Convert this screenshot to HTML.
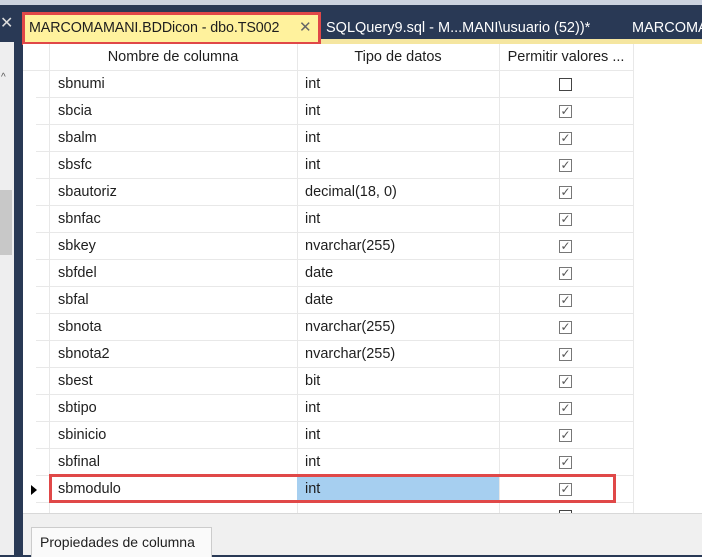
<!DOCTYPE html><html><head><style>
*{margin:0;padding:0;box-sizing:border-box}
body{width:702px;height:555px;overflow:hidden;background:#293955;font-family:"Liberation Sans",sans-serif;font-size:14.5px;position:relative;color:#1e1e1e}
.abs{position:absolute}
.cell{position:absolute;height:27px;line-height:27px;white-space:nowrap}
.cb{position:absolute;width:13px;height:13px;border:1px solid #555;background:#fff}
</style></head><body>
<div class="abs" style="left:0;top:0;width:702px;height:5px;background:#ccd3e0"></div>
<div class="abs" style="left:0;top:42px;width:14px;height:513px;background:#eeeeef"></div>
<div class="abs" style="left:0;top:5px;width:14px;height:37px;color:#ddd;font-size:16px;line-height:37px">✕</div>
<div class="abs" style="left:1px;top:72px;font-size:10px;color:#555">^</div>
<div class="abs" style="left:0;top:190px;width:12px;height:65px;background:#c8c8c8"></div>
<div class="abs" style="left:22px;top:12px;width:299px;height:33px;background:#fff29d;border:3px solid #e04848"></div>
<div class="abs" style="left:29px;top:17px;font-size:14.3px;letter-spacing:-0.1px;color:#1e1e1e;line-height:22px">MARCOMAMANI.BDDicon - dbo.TS002</div>
<div class="abs" style="left:299px;top:17px;font-size:15px;color:#666;line-height:22px">✕</div>
<div class="abs" style="left:326px;top:17px;font-size:14.5px;color:#fff;line-height:22px">SQLQuery9.sql - M...MANI\usuario (52))*</div>
<div class="abs" style="left:632px;top:17px;width:70px;overflow:hidden;font-size:14.5px;color:#fff;line-height:22px;white-space:nowrap">MARCOMAMANI</div>
<div class="abs" style="left:321px;top:39px;width:381px;height:5px;background:#f5e6a0"></div>
<div class="abs" style="left:23px;top:44px;width:679px;height:470px;background:#fff"></div>
<div id="g"></div>
<div class="abs" style="left:23px;top:513px;width:679px;height:42px;background:#f0f0f0;border-top:1px solid #d8d8d8"></div>
<div class="abs" style="left:31px;top:527px;width:181px;height:30px;background:#fafafa;border:1px solid #ccc;border-bottom:none;padding-left:8px;line-height:28px;font-size:14px">Propiedades de columna</div>
<script>
var rows=[["sbnumi","int",0],["sbcia","int",1],["sbalm","int",1],["sbsfc","int",1],["sbautoriz","decimal(18, 0)",1],["sbnfac","int",1],["sbkey","nvarchar(255)",1],["sbfdel","date",1],["sbfal","date",1],["sbnota","nvarchar(255)",1],["sbnota2","nvarchar(255)",1],["sbest","bit",1],["sbtipo","int",1],["sbinicio","int",1],["sbfinal","int",1],["sbmodulo","int",1],["","",0]];
var h='';
function vl(x,y,hh){return '<div class="abs" style="left:'+x+'px;top:'+y+'px;width:1px;height:'+hh+'px;background:#e8e8e8"></div>'}
h+='<div class="cell" style="left:49px;top:44px;width:248px;text-align:center">Nombre de columna</div>';
h+='<div class="cell" style="left:297px;top:44px;width:202px;text-align:center">Tipo de datos</div>';
h+='<div class="cell" style="left:499px;top:44px;width:134px;text-align:center">Permitir valores ...</div>';
h+='<div class="abs" style="left:23px;top:70px;width:610px;height:1px;background:#e8e8e8"></div>';
h+=vl(49,44,470)+vl(297,44,470)+vl(499,44,470)+vl(633,44,470);
for(var i=0;i<rows.length;i++){var y=71+27*i,r=rows[i];
h+='<div class="abs" style="left:36px;top:'+(y+26)+'px;width:597px;height:1px;background:#e8e8e8"></div>';
if(i==15){h+='<div class="abs" style="left:297px;top:'+(y+1)+'px;width:202px;height:25px;background:#a6cff0"></div>';
h+='<div class="abs" style="left:31px;top:'+(y+9)+'px;width:0;height:0;border-left:6px solid #000;border-top:5px solid transparent;border-bottom:5px solid transparent"></div>';}
h+='<div class="cell" style="left:58px;top:'+y+'px">'+r[0]+'</div>';
h+='<div class="cell" style="left:305px;top:'+y+'px">'+r[1]+'</div>';
h+='<div class="cb" style="left:559px;top:'+(y+7)+'px;border-color:'+(r[2]?'#777':'#444')+';color:#555;font-size:12px;line-height:11px;text-align:center">'+(r[2]?'✓':'')+'</div>';}
h+='<div class="abs" style="left:49px;top:474px;width:567px;height:29px;border:3px solid #e04848"></div>';
document.getElementById('g').innerHTML=h;
</script>
</body></html>
